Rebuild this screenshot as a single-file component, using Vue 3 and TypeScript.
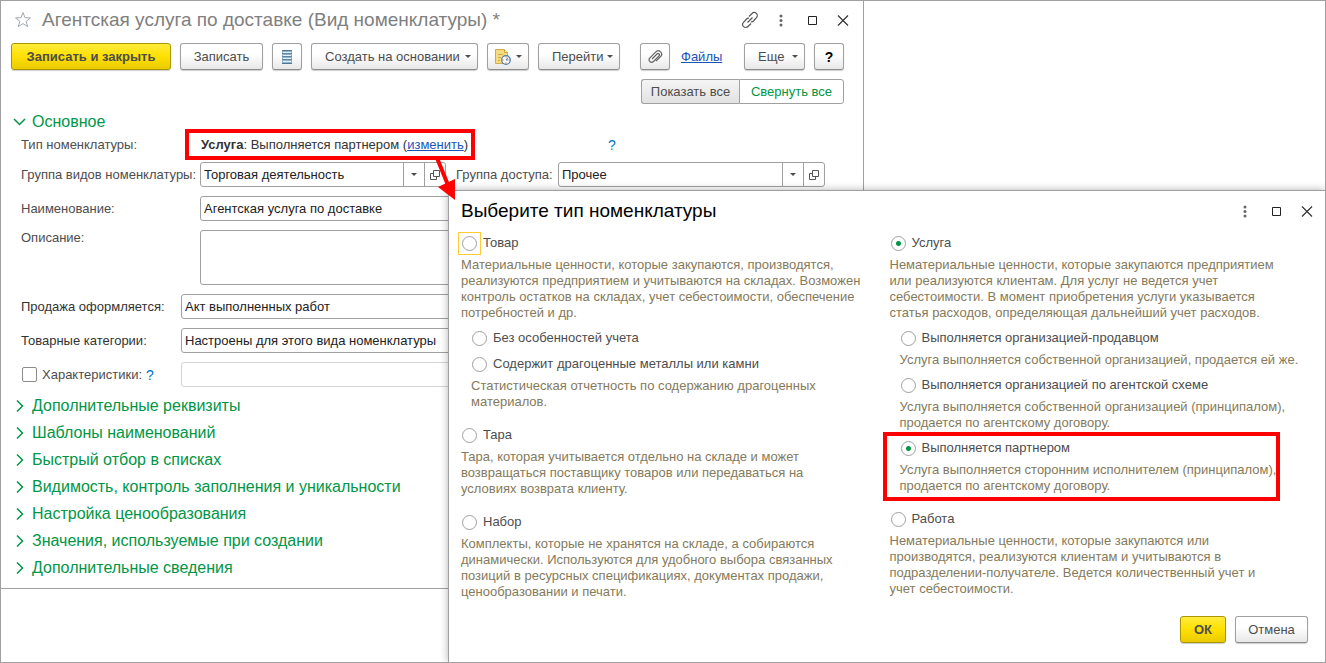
<script setup lang="ts">
import { ref } from 'vue'

interface SubOption {
  id: string
  label: string
  hint?: string
  marked?: boolean
}
interface Option {
  id: string
  label: string
  hint: string
  focused?: boolean
  children: SubOption[]
}

const sections: string[] = [
  'Дополнительные реквизиты',
  'Шаблоны наименований',
  'Быстрый отбор в списках',
  'Видимость, контроль заполнения и уникальности',
  'Настройка ценообразования',
  'Значения, используемые при создании',
  'Дополнительные сведения',
]

const columns: Option[][] = [
  [
    {
      id: 'goods',
      label: 'Товар',
      hint: 'Материальные ценности, которые закупаются, производятся,\nреализуются предприятием и учитываются на складах. Возможен\nконтроль остатков на складах, учет себестоимости, обеспечение\nпотребностей и др.',
      focused: true,
      children: [
        { id: 'plain', label: 'Без особенностей учета' },
        {
          id: 'precious',
          label: 'Содержит драгоценные металлы или камни',
          hint: 'Статистическая отчетность по содержанию драгоценных\nматериалов.',
        },
      ],
    },
    {
      id: 'package',
      label: 'Тара',
      hint: 'Тара, которая учитывается отдельно на складе и может\nвозвращаться поставщику товаров или передаваться на\nусловиях возврата клиенту.',
      children: [],
    },
    {
      id: 'set',
      label: 'Набор',
      hint: 'Комплекты, которые не хранятся на складе, а собираются\nдинамически. Используются для удобного выбора связанных\nпозиций в ресурсных спецификациях, документах продажи,\nценообразовании и печати.',
      children: [],
    },
  ],
  [
    {
      id: 'service',
      label: 'Услуга',
      hint: 'Нематериальные ценности, которые закупаются предприятием\nили реализуются клиентам. Для услуг не ведется учет\nсебестоимости. В момент приобретения услуги указывается\nстатья расходов, определяющая дальнейший учет расходов.',
      children: [
        {
          id: 'seller',
          label: 'Выполняется организацией-продавцом',
          hint: 'Услуга выполняется собственной организацией, продается ей же.',
        },
        {
          id: 'agent',
          label: 'Выполняется организацией по агентской схеме',
          hint: 'Услуга выполняется собственной организацией (принципалом),\nпродается по агентскому договору.',
        },
        {
          id: 'partner',
          label: 'Выполняется партнером',
          hint: 'Услуга выполняется сторонним исполнителем (принципалом),\nпродается по агентскому договору.',
          marked: true,
        },
      ],
    },
    {
      id: 'work',
      label: 'Работа',
      hint: 'Нематериальные ценности, которые закупаются или\nпроизводятся, реализуются клиентам и учитываются в\nподразделении-получателе. Ведется количественный учет и\nучет себестоимости.',
      children: [],
    },
  ],
]

const kind = ref('service')
const detail = ref('partner')
const group = ref('Торговая деятельность')
const access = ref('Прочее')
const name = ref('Агентская услуга по доставке')
const description = ref('')
const sale = ref('Акт выполненных работ')
const categories = ref('Настроены для этого вида номенклатуры')
const characteristics = ref('')
const useCharacteristics = ref(false)
</script>

<template>
  <div class="desktop">
    <main class="window card">
      <header class="titlebar">
        <button class="plain" aria-label="В избранное">
          <svg width="18" height="18" viewBox="0 0 18 18"><path d="M9 1.500l2 5.200 5.500.2-4.300 3.400 1.500 5.400L9 12.600l-4.700 3.100 1.500-5.400L1.500 6.900 7 6.700z" fill="none" stroke="#a3a9b0" /></svg>
        </button>
        <h1>Агентская услуга по доставке (Вид номенклатуры) *</h1>
        <div class="tools">
          <button class="plain" aria-label="Получить ссылку">
            <svg width="18" height="18" viewBox="0 0 18 18" fill="none" stroke="#555" stroke-width="1.200"><path d="M8 5.500L11 2.500a3 3 0 0 1 4.500 4.200L12.500 10a3 3 0 0 1-2.500.8M10 12.500L7 15.500a3 3 0 0 1-4.500-4.200L5.500 8a3 3 0 0 1 2.500-.8M6.500 11.500l5-5" /></svg>
          </button>
          <button class="plain" aria-label="Меню"><svg width="18" height="18" viewBox="0 0 18 18" fill="#666"><circle cx="9" cy="5" r="1.500" /><circle cx="9" cy="9.500" r="1.500" /><circle cx="9" cy="14" r="1.500" /></svg></button>
          <button class="plain" aria-label="Развернуть"><svg width="18" height="18" viewBox="0 0 18 18"><path d="M5.500 5.500h8v8h-8z" fill="none" stroke="#222" /></svg></button>
          <button class="plain" aria-label="Закрыть"><svg width="18" height="18" viewBox="0 0 18 18"><path d="M4 4.500l10 10M14 4.500l-10 10" fill="none" stroke="#333" stroke-width="1.200" /></svg></button>
        </div>
      </header>

      <div class="commands">
        <button class="btn primary save">Записать и закрыть</button>
        <button class="btn write">Записать</button>
        <button class="btn icon" aria-label="Список">
          <svg width="12" height="16" viewBox="0 0 12 16"><path d="M1 1h10v14H1z" fill="#8fb2cc" /><path d="M1 1.500h10M1 14.500h10" stroke="#4d7899" /><path d="M2 3.500h8M2 6.500h8M2 9.500h8M2 12.500h8" stroke="#e5f0f7" /><path d="M1 4.500h10M1 7.500h10M1 10.500h10" stroke="#5e87a6" /></svg>
        </button>
        <button class="btn drop create">Создать на основании<i class="caret" /></button>
        <button class="btn drop report" aria-label="Отчеты">
          <svg width="16" height="16" viewBox="0 0 16 16"><path d="M.5.500h9l3 3v11H.5z" fill="#f4dc83" stroke="#d0ab4c" /><path d="M9.500.500v3h3" fill="#fff3bd" stroke="#c9a544" /><path d="M3 5.500h5M3 8.500h3M3 11.500h2" stroke="#d0ab4c" /><circle cx="11" cy="11" r="4.300" fill="#fff" stroke="#4a7dab" stroke-width="1.200" /><path d="M11 11l2-2.500M11 11h2" stroke="#4a7dab" /><path d="M11 7.500v1M11 13.500v1M7.500 11h1M13.500 11h1" stroke="#e03131" /></svg>
          <i class="caret" />
        </button>
        <button class="btn drop goto">Перейти<i class="caret" /></button>
        <button class="btn icon clip" aria-label="Прикрепить">
          <svg width="16" height="16" viewBox="0 0 16 16" fill="none" stroke="#666" stroke-width="1.200"><path d="M5 10l5-5a1.400 1.400 0 0 1 2 2l-5.500 5.500a2.500 2.500 0 0 1-3.600-3.600l6-6a3.300 3.300 0 0 1 4.700 4.700l-4.600 4.600" /></svg>
        </button>
        <a class="files" href="#">Файлы</a>
        <button class="btn drop more">Еще<i class="caret" /></button>
        <button class="btn icon help">?</button>
      </div>

      <div class="switcher">
        <button class="seg on">Показать все</button>
        <button class="seg">Свернуть все</button>
      </div>

      <h2 class="section main-section">
        <svg width="14" height="14" viewBox="0 0 14 14"><path d="M2 4l5.500 5.500L13 4" fill="none" stroke="#009646" stroke-width="1.500" /></svg>Основное
      </h2>

      <div class="form">
        <div class="row type-row">
          <span class="lbl">Тип номенклатуры:</span>
          <p class="type"><b>Услуга</b>: Выполняется партнером (<a href="#">изменить</a>)</p>
          <button class="plain q type-q">?</button>
        </div>
        <div class="row">
          <label class="lbl" for="group">Группа видов номенклатуры:</label>
          <div class="field group">
            <input id="group" v-model="group" />
            <button aria-label="Выбрать группу"><i class="caret" /></button>
            <button aria-label="Открыть группу"><svg width="12" height="12" viewBox="0 0 12 12" fill="none" stroke="#555"><path d="M4.500 1.500h6v6h-6zM4 4.500H1.500v6h6V8" /></svg></button>
          </div>
          <label class="lbl2" for="access">Группа доступа:</label>
          <div class="field access">
            <input id="access" v-model="access" />
            <button aria-label="Выбрать доступ"><i class="caret" /></button>
            <button aria-label="Открыть доступ"><svg width="12" height="12" viewBox="0 0 12 12" fill="none" stroke="#555"><path d="M4.500 1.500h6v6h-6zM4 4.500H1.500v6h6V8" /></svg></button>
          </div>
        </div>
        <div class="row">
          <label class="lbl" for="name">Наименование:</label>
          <div class="field"><input id="name" v-model="name" /></div>
        </div>
        <div class="row tall">
          <label class="lbl" for="description">Описание:</label>
          <div class="field"><textarea id="description" v-model="description" /></div>
        </div>
        <div class="row narrow">
          <label class="lbl dark" for="sale">Продажа оформляется:</label>
          <div class="field"><input id="sale" v-model="sale" /></div>
        </div>
        <div class="row narrow">
          <label class="lbl dark" for="categories">Товарные категории:</label>
          <div class="field"><input id="categories" v-model="categories" /></div>
        </div>
        <div class="row narrow">
          <div class="lbl check">
            <input id="use" v-model="useCharacteristics" type="checkbox" />
            <label for="use">Характеристики:</label>
            <button class="plain q">?</button>
          </div>
          <div class="field off"><input v-model="characteristics" aria-label="Характеристики" disabled /></div>
        </div>
      </div>

      <h2 v-for="s in sections" :key="s" class="section">
        <svg width="14" height="14" viewBox="0 0 14 14"><path d="M5 1.500l5.500 5.500L5 12.500" fill="none" stroke="#009646" stroke-width="1.500" /></svg>{{ s }}
      </h2>
    </main>

    <section class="window dialog" role="dialog" aria-labelledby="dialog-title">
      <header class="titlebar">
        <h1 id="dialog-title">Выберите тип номенклатуры</h1>
        <div class="tools">
          <button class="plain" aria-label="Меню"><svg width="18" height="18" viewBox="0 0 18 18" fill="#666"><circle cx="9" cy="5" r="1.500" /><circle cx="9" cy="9.500" r="1.500" /><circle cx="9" cy="14" r="1.500" /></svg></button>
          <button class="plain" aria-label="Развернуть"><svg width="18" height="18" viewBox="0 0 18 18"><path d="M5.500 5.500h8v8h-8z" fill="none" stroke="#222" /></svg></button>
          <button class="plain" aria-label="Закрыть"><svg width="18" height="18" viewBox="0 0 18 18"><path d="M4 4.500l10 10M14 4.500l-10 10" fill="none" stroke="#333" stroke-width="1.200" /></svg></button>
        </div>
      </header>
      <div class="options">
        <div v-for="(col, i) in columns" :key="i" class="column">
          <div v-for="o in col" :key="o.id" class="option">
            <label class="radio" :class="{ focused: o.focused }">
              <span class="dot"><input v-model="kind" type="radio" name="kind" :value="o.id" /></span>{{ o.label }}
            </label>
            <p class="hint">{{ o.hint }}</p>
            <div v-for="c in o.children" :key="c.id" class="sub" :class="{ marked: c.marked, short: !c.hint }">
              <label class="radio">
                <span class="dot"><input v-model="detail" type="radio" name="detail" :value="c.id" /></span>{{ c.label }}
              </label>
              <p v-if="c.hint" class="hint">{{ c.hint }}</p>
            </div>
          </div>
        </div>
      </div>
      <footer class="actions">
        <button class="btn primary ok">ОК</button>
        <button class="btn cancel">Отмена</button>
      </footer>
    </section>

    <svg class="arrow" width="28" height="46" viewBox="0 0 28 46" aria-hidden="true"><path d="M3 0L14 27" stroke="#f00" stroke-width="4" /><path d="M4 29l17-8v21z" fill="#f00" /></svg>
  </div>
</template>

<style>
body {
  margin: 0;
  background: #fff;
}
</style>

<style scoped>
* {
  box-sizing: border-box;
}
.desktop {
  position: relative;
  min-height: 100vh;
  border: 1px solid #a0a0a0;
  font: 13px/16px "Liberation Sans", Arial, sans-serif;
  color: #4d4d4d;
  overflow: hidden;
}
button,
input,
textarea {
  font: inherit;
  color: inherit;
  margin: 0;
}
h1,
h2,
p {
  margin: 0;
  font-weight: normal;
}
a {
  color: #1a54b8;
}
.window {
  position: absolute;
  background: #fff;
}
.card {
  top: 0;
  left: 0;
  right: 461px;
  border: solid #a0a0a0;
  border-width: 0 1px 1px 0;
  padding: 0 19px 7px 10px;
}
.dialog {
  top: 189px;
  left: 447px;
  right: 0;
  bottom: 0;
  display: flex;
  flex-direction: column;
  border: solid #a0a0a0;
  border-width: 1px 0 0 1px;
  box-shadow: 0 0 8px rgba(0, 0, 0, 0.3);
  padding: 0 17px 19px 12px;
}
.plain {
  display: flex;
  padding: 0;
  border: 0;
  background: none;
}
.titlebar {
  display: flex;
  align-items: center;
  gap: 10px;
  height: 38px;
  margin-right: -8px;
  padding-left: 3px;
}
.titlebar h1 {
  font-size: 19px;
  line-height: 24px;
  color: #808080;
}
.dialog .titlebar {
  height: 40px;
  padding-left: 0;
}
.dialog h1 {
  color: #000;
}
.tools {
  display: flex;
  gap: 13px;
  margin-left: auto;
}
.commands {
  display: flex;
  align-items: center;
  gap: 9px;
  padding-top: 4px;
}
.btn {
  display: flex;
  align-items: center;
  justify-content: center;
  height: 27px;
  padding: 0;
  border: 1px solid #a0a0a0;
  border-bottom-color: #8c8c8c;
  border-radius: 3px;
  background: linear-gradient(#fff 40%, #e8e8e8);
  box-shadow: 0 1px 1px rgba(0, 0, 0, 0.2);
  white-space: nowrap;
}
.primary {
  border-color: #a89500;
  background: linear-gradient(#ffec3d, #ffe000 50%, #e9cb00);
  font-weight: bold;
}
.save {
  width: 160px;
}
.write {
  width: 83px;
}
.icon {
  width: 30px;
}
.drop {
  justify-content: space-between;
  padding: 0 6px 0 13px;
}
.create {
  width: 167px;
}
.report {
  width: 42px;
  padding-left: 7px;
}
.goto {
  width: 82px;
}
.clip {
  margin-left: 11px;
}
.files {
  margin: 0 auto 0 2px;
}
.more {
  width: 61px;
}
.help {
  font-size: 14px;
  font-weight: bold;
  color: #000;
}
.caret {
  border: solid transparent;
  border-width: 3px 3px 0;
  border-top-color: #4d4d4d;
}
.switcher {
  display: flex;
  justify-content: flex-end;
  margin-top: 9px;
}
.seg {
  width: 105px;
  height: 25px;
  padding: 0;
  border: 1px solid #a0a0a0;
  border-radius: 0 3px 3px 0;
  background: #fff;
  color: #009646;
}
.seg.on {
  width: 98px;
  border-right: 0;
  border-radius: 3px 0 0 3px;
  background: linear-gradient(#f4f4f4, #e2e2e2);
  color: #4d4d4d;
}
.section {
  display: flex;
  align-items: center;
  gap: 6px;
  height: 27px;
  padding-left: 1px;
  font-size: 16px;
  color: #009646;
}
.main-section {
  height: 22px;
  margin-top: 7px;
}
.form {
  display: grid;
  gap: 9px;
  padding: 0 8px 5px 10px;
}
.row {
  display: flex;
  align-items: center;
}
.lbl {
  flex: none;
  width: 179px;
  white-space: nowrap;
}
.dark {
  color: #333;
}
.narrow .lbl {
  width: 160px;
}
.type-row {
  height: 31px;
  margin: -4px 0 -7px;
}
.type {
  margin-left: -15px;
  padding: 4px 3px 3px 12px;
  border: 4px solid #f00;
  color: #333;
}
.q {
  color: #0076bd;
  font-size: 14px;
}
.type-q {
  margin-left: 133px;
}
.field {
  display: flex;
  flex: 1;
  min-width: 0;
  height: 25px;
  border: 1px solid #a0a0a0;
  border-radius: 3px;
  color: #222;
}
.field input,
.field textarea {
  flex: 1;
  min-width: 0;
  padding: 0 3px;
  border: 0;
  background: none;
  outline: 0;
  resize: none;
}
.field button {
  display: flex;
  align-items: center;
  justify-content: center;
  width: 21px;
  padding: 0;
  border: 0;
  border-left: 1px solid #a0a0a0;
  background: none;
}
.field.off {
  border-color: #d4d4d4;
}
.group {
  flex: 0 0 246px;
}
.lbl2 {
  width: 102px;
  margin-left: 10px;
  white-space: nowrap;
}
.access {
  flex: 1;
  margin-right: 11px;
}
.tall {
  align-items: flex-start;
}
.tall .field {
  height: 55px;
}
.check {
  display: flex;
  align-items: center;
}
.check input {
  appearance: none;
  width: 15px;
  height: 15px;
  margin: 0 5px 0 1px;
  border: 1px solid #8c8c8c;
  border-radius: 2px;
}
.check .q {
  margin-left: 4px;
}
.options {
  display: grid;
  grid-template-columns: 1fr 1fr;
  gap: 10px;
}
.column {
  display: flex;
  flex-direction: column;
  gap: 13px;
}
.radio {
  display: flex;
  align-items: center;
  height: 24px;
  padding-left: 1px;
}
.dot {
  display: flex;
  margin-right: 6px;
}
.focused .dot {
  margin: 0 2px 0 -4px;
  padding: 3px;
  border: 1px solid #fc3;
}
.dot input {
  appearance: none;
  width: 15px;
  height: 15px;
  border: 1px solid #a0a0a0;
  border-radius: 50%;
}
.dot input:checked {
  background: radial-gradient(circle, #009646 2px, transparent 3px);
}
.hint {
  margin-top: 2px;
  white-space: pre-line;
  color: #857a5b;
}
.sub {
  margin: 5px 0 0 10px;
}
.short + .sub {
  margin-top: 2px;
}
.sub.marked {
  margin: 1px 28px -7px -7px;
  padding: 0 0 3px 13px;
  border: 4px solid #f00;
}
.marked .hint {
  margin-right: -4px;
}
.arrow {
  position: absolute;
  left: 433px;
  top: 157px;
}
.ok {
  width: 46px;
}
.cancel {
  width: 73px;
}
.actions {
  display: flex;
  justify-content: flex-end;
  gap: 9px;
  margin-top: auto;
}
</style>
